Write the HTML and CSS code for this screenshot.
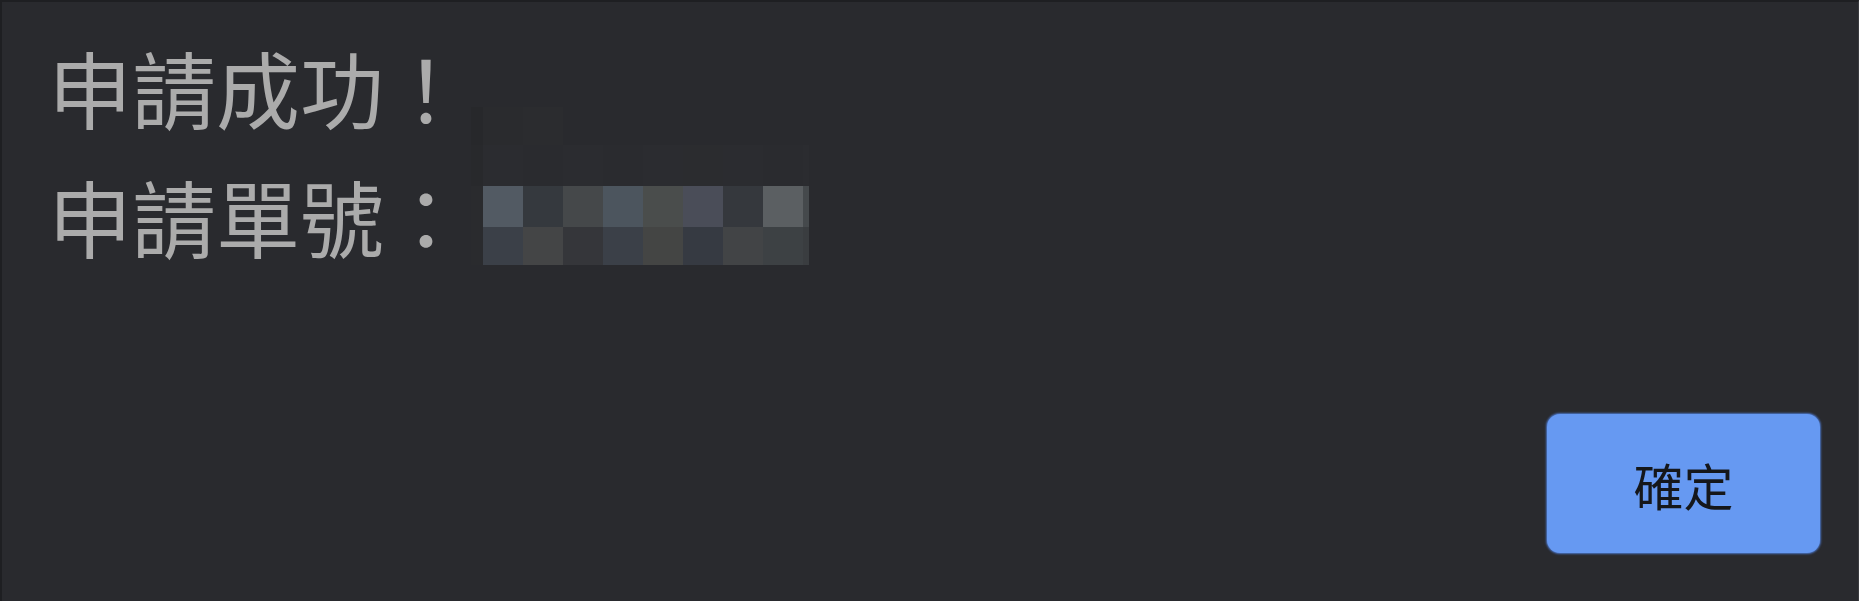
FILE: index.html
```html
<!DOCTYPE html>
<html lang="zh-Hant">
<head>
<meta charset="utf-8">
<link rel="stylesheet" href="styles.css">
</head>
<body>
<div class="dialog">
  <div class="content">
    <div class="lines">
      <div class="line">申請成功！</div>
      <div class="line">申請單號：</div>
    </div>
    <div class="mosaic">
      <i class="c0" style="background:#27282b"></i><i style="background:#2a2b2e"></i><i style="background:#2b2c2f"></i><i></i><i></i><i></i><i></i><i></i><i></i><i class="c9"></i>
      <i class="c0" style="background:#28292c"></i><i style="background:#2b2c30"></i><i style="background:#2a2b2f"></i><i style="background:#2b2c30"></i><i style="background:#2a2b2f"></i><i style="background:#2b2c30"></i><i style="background:#2b2c2f"></i><i style="background:#2b2c30"></i><i style="background:#2a2b2f"></i><i class="c9" style="background:#2b2c30"></i>
      <i class="c0" style="background:#2a2b2e"></i><i style="background:#525a63"></i><i style="background:#35393e"></i><i style="background:#45484a"></i><i style="background:#4c555e"></i><i style="background:#4a4d4c"></i><i style="background:#4a4d58"></i><i style="background:#35383d"></i><i style="background:#5b5f62"></i><i class="c9" style="background:#45494c"></i>
      <i class="c0" style="background:#2a2b2e"></i><i style="background:#3b4048"></i><i style="background:#444546"></i><i style="background:#35363a"></i><i style="background:#3b4048"></i><i style="background:#444544"></i><i style="background:#363a42"></i><i style="background:#424446"></i><i style="background:#3d4144"></i><i class="c9" style="background:#3a3d40"></i>
    </div>
  </div>
  <div class="actions">
    <button class="ok">確定</button>
  </div>
</div>
</body>
</html>
```

FILE: styles.css
```css
html, body {
  margin: 0;
  padding: 0;
  background: #292a2e;
}

.dialog {
  box-sizing: border-box;
  width: 1859px;
  height: 601px;
  background: #292a2e;
  border-top: 2px solid #1e1f22;
  border-left: 2px solid #1e1f22;
  border-right: 1px solid #3a3b3f;
  display: flex;
  flex-direction: column;
  justify-content: space-between;
}

.content {
  display: flex;
  align-items: flex-start;
  padding: 20px 0 0 46px;
}

.lines {
  display: flex;
  flex-direction: column;
}

.line {
  font-family: "Noto Sans CJK TC", "Noto Sans CJK SC", sans-serif;
  font-size: 84px;
  line-height: 129px;
  color: #ababab;
  white-space: nowrap;
}

.mosaic {
  display: grid;
  grid-template-columns: 12px repeat(8, 40px) 6px;
  grid-template-rows: 38px 41px 41px 38px;
  margin-top: 85px;
  margin-left: 3px;
}

.mosaic i {
  display: block;
}

.actions {
  display: flex;
  justify-content: flex-end;
  padding: 0 38px 48px 0;
}

.ok {
  width: 273px;
  height: 139px;
  border: none;
  border-radius: 13px;
  background: #6699f2;
  box-shadow: 0 0 2px 1px #4a72c0;
  font-family: "Noto Sans CJK TC", "Noto Sans CJK SC", sans-serif;
  font-size: 50px;
  color: #15171b;
  padding: 0;
}
```
